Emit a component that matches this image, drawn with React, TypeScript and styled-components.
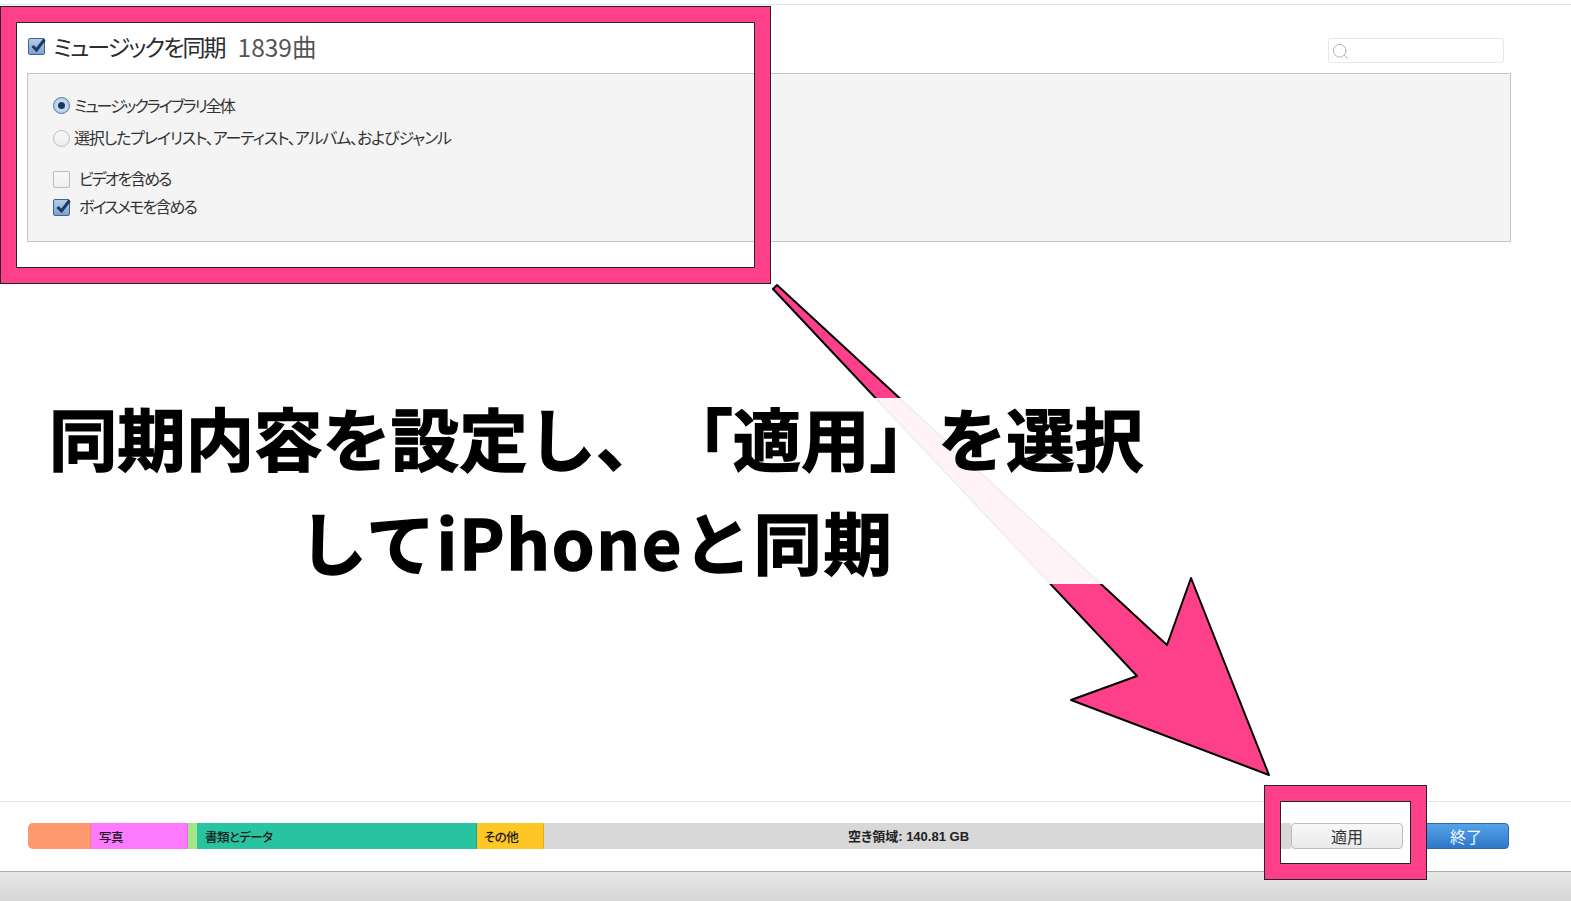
import styled, { createGlobalStyle } from "styled-components";
import { Search } from "lucide-react";

const PINK = "#fe3f8a";
const JP = `"Noto Sans CJK JP", "Noto Sans", sans-serif`;

const GlobalStyle = createGlobalStyle`
  html, body {
    margin: 0;
    padding: 0;
    background: #fff;
    overflow: hidden;
  }
  body {
    font-family: ${JP};
    font-feature-settings: "palt";
  }
`;

const Page = styled.div`
  position: relative;
  width: 1571px;
  height: 901px;
  overflow: hidden;
  display: flex;
  flex-direction: column;
`;

const Main = styled.main`
  flex: 1;
  margin-top: 4px;
  border-top: 1px solid #e4e4e4;
  padding: 0 60px 0 27px;
`;

const HeaderRow = styled.div`
  height: 68px;
  display: flex;
  align-items: flex-start;
  justify-content: space-between;
`;

const TitleGroup = styled.label`
  margin: 24px 0 0 1px;
  display: flex;
  align-items: center;
  gap: 8px;
  height: 34px;
`;

const Title = styled.span`
  font-size: 23px;
  color: #2c2c2c;
  letter-spacing: -1.95px;
`;

const Count = styled.span`
  margin-left: 5px;
  font-size: 24.5px;
  color: #555;
`;

const SearchBox = styled.div`
  margin: 33px 7px 0 0;
  box-sizing: border-box;
  width: 176px;
  height: 25px;
  border: 1px solid #e8e8e8;
  border-radius: 3px;
  padding: 2px 0 0 2px;
  display: flex;
  align-items: center;
  color: #b0b0b0;
`;

const Panel = styled.section`
  box-sizing: border-box;
  height: 169px;
  background: #f4f4f4;
  border: 1px solid #c4c4c4;
  padding: 15px 0 0 25px;
  display: flex;
  flex-direction: column;
`;

const Option = styled.div<{ $height: number; $gap: number; $spacing: number }>`
  height: ${(p) => p.$height}px;
  display: flex;
  align-items: center;
  gap: ${(p) => p.$gap}px;
  font-size: 16px;
  color: #333;
  letter-spacing: ${(p) => p.$spacing}px;
`;

const OptionLabel = styled.span`
  margin-top: -2px;
`;

const CheckBox = styled.span<{ $on?: boolean }>`
  position: relative;
  box-sizing: border-box;
  flex: none;
  width: 17px;
  height: 17px;
  border-radius: 2px;
  border: 1px solid ${(p) => (p.$on ? "#3f6290" : "#bdbdbd")};
  background: ${(p) =>
    p.$on ? "linear-gradient(#b5cde8, #7ea2cd)" : "linear-gradient(#fafafa, #eeeeee)"};
  svg {
    position: absolute;
    left: 0;
    top: -3px;
  }
`;

const Radio = styled.span<{ $on?: boolean }>`
  box-sizing: border-box;
  flex: none;
  width: 17px;
  height: 17px;
  border-radius: 50%;
  display: flex;
  align-items: center;
  justify-content: center;
  border: 1px solid ${(p) => (p.$on ? "#4f79aa" : "#bdbdbd")};
  background: ${(p) =>
    p.$on ? "radial-gradient(#dbe8f6, #a7c3e2)" : "linear-gradient(#f9f9f9, #ececec)"};
  &::after {
    content: "";
    display: ${(p) => (p.$on ? "block" : "none")};
    width: 7px;
    height: 7px;
    border-radius: 50%;
    background: #1d3557;
  }
`;

const OptionSpacer = styled.div`
  height: 11px;
`;

const Footer = styled.footer`
  box-sizing: border-box;
  height: 70px;
  border-top: 1px solid #e5e5e5;
  padding: 21px 62px 0 28px;
  display: flex;
  align-items: flex-start;
`;

const StorageBar = styled.div`
  flex: 1;
  height: 26px;
  display: flex;
  border-radius: 5px 0 0 5px;
  overflow: hidden;
  background: #d8d8d8;
`;

const Segment = styled.div<{ $width: number; $color: string; $edge?: string; $pad?: number }>`
  box-sizing: border-box;
  flex: none;
  width: ${(p) => p.$width}px;
  background: ${(p) => p.$color};
  border-right: 1px solid ${(p) => p.$edge ?? p.$color};
  padding: 1px 0 0 ${(p) => p.$pad ?? 8}px;
  font-size: 12.5px;
  font-weight: 500;
  line-height: 26px;
  letter-spacing: -0.6px;
  color: #1a1a1a;
  white-space: nowrap;
`;

const FreeSpace = styled.div`
  flex: 1;
  padding: 1px 18px 0 0;
  text-align: center;
  font-size: 13px;
  font-weight: 700;
  line-height: 26px;
  color: #222;
  font-family: "Liberation Sans", ${JP};
`;

const Button = styled.button<{ $primary?: boolean }>`
  box-sizing: border-box;
  flex: none;
  height: 26px;
  padding: 0;
  border-radius: 4px;
  font-family: ${JP};
  font-size: 16px;
  line-height: 22px;
  border: 1px solid ${(p) => (p.$primary ? "#2f6aa8" : "#bcbcbc")};
  color: ${(p) => (p.$primary ? "#f2f8ff" : "#333")};
  background: ${(p) =>
    p.$primary ? "linear-gradient(#55a3ea, #2f77c9)" : "linear-gradient(#f8f8f8, #e9e9e9)"};
`;

const ApplyButton = styled(Button)`
  width: 112px;
`;

const DoneButton = styled(Button)`
  width: 86px;
  margin-left: 20px;
`;

const WindowEdge = styled.div`
  box-sizing: border-box;
  height: 30px;
  border-top: 1px solid #aaaaaa;
  background: linear-gradient(#e7e7e7, #d7d7d7);
`;

/* annotations drawn over the screenshot */
const Highlight = styled.div<{ $x: number; $y: number; $w: number; $h: number }>`
  position: absolute;
  box-sizing: border-box;
  left: ${(p) => p.$x}px;
  top: ${(p) => p.$y}px;
  width: ${(p) => p.$w}px;
  height: ${(p) => p.$h}px;
  border: 15px solid ${PINK};
  box-shadow: 0 0 0 1px #26222a, inset 0 0 0 1px #26222a;
`;

const Arrow = styled.svg`
  position: absolute;
  left: 0;
  top: 0;
`;

const Caption = styled.div`
  position: absolute;
  left: 40px;
  top: 398px;
  width: 1112px;
  height: 186px;
  background: rgba(255, 255, 255, 0.94);
  text-align: center;
  font-size: 68.4px;
  font-weight: 700;
  font-feature-settings: normal;
  text-spacing-trim: space-all;
  -webkit-text-stroke: 1.4px #000;
  line-height: 104px;
  color: #000;
  white-space: nowrap;
`;

const CaptionText = styled.div<{ $offset: number; $spacing: number }>`
  margin-top: ${(p) => p.$offset}px;
  letter-spacing: ${(p) => p.$spacing}px;
`;

function Check() {
  return (
    <svg width="18" height="18" viewBox="0 0 18 18">
      <path d="M3.5 10 L7.5 14 L15.5 3.5" fill="none" stroke="#1d3a66" strokeWidth="3" />
    </svg>
  );
}

export default function App() {
  return (
    <Page>
      <GlobalStyle />
      <Main>
        <HeaderRow>
          <TitleGroup>
            <CheckBox $on>
              <Check />
            </CheckBox>
            <Title>ミュージックを同期</Title>
            <Count>1839曲</Count>
          </TitleGroup>
          <SearchBox>
            <Search size={19} strokeWidth={1.2} />
          </SearchBox>
        </HeaderRow>
        <Panel>
          <Option $height={33} $gap={4} $spacing={-2}>
            <Radio $on />
            <OptionLabel>ミュージックライブラリ全体</OptionLabel>
          </Option>
          <Option $height={32} $gap={4} $spacing={-1.13}>
            <Radio />
            <OptionLabel>選択したプレイリスト、アーティスト、アルバム、およびジャンル</OptionLabel>
          </Option>
          <OptionSpacer />
          <Option $height={28} $gap={9} $spacing={-2}>
            <CheckBox />
            <OptionLabel>ビデオを含める</OptionLabel>
          </Option>
          <Option $height={28} $gap={9} $spacing={-1.85}>
            <CheckBox $on>
              <Check />
            </CheckBox>
            <OptionLabel>ボイスメモを含める</OptionLabel>
          </Option>
        </Panel>
      </Main>
      <Footer>
        <StorageBar>
          <Segment $width={63} $color="#ff9a6e" $edge="#f08a5e" />
          <Segment $width={97} $color="#fd7aff" $edge="#e56ae8">
            写真
          </Segment>
          <Segment $width={7} $color="#a5e787" />
          <Segment $width={280} $color="#28c4a2" $edge="#1ca585" $pad={8}>
            書類とデータ
          </Segment>
          <Segment $width={67} $color="#ffc725" $edge="#eeaa10" $pad={7}>
            その他
          </Segment>
          <FreeSpace>空き領域: 140.81 GB</FreeSpace>
        </StorageBar>
        <ApplyButton>適用</ApplyButton>
        <DoneButton $primary>終了</DoneButton>
      </Footer>
      <WindowEdge />

      <Highlight $x={1} $y={7} $w={769} $h={276} />
      <Highlight $x={1265} $y={786} $w={161} $h={93} />
      <Arrow width="1571" height="901" viewBox="0 0 1571 901">
        <polygon
          points="773,289 777,285 1167,645 1191,578 1269,775 1071,700 1137,676"
          fill={PINK}
          stroke="#000"
          strokeWidth="2"
          strokeLinejoin="round"
        />
      </Arrow>
      <Caption>
        <CaptionText $offset={-13} $spacing={0}>
          同期内容を設定し、「適用」を選択
        </CaptionText>
        <CaptionText $offset={0} $spacing={1.7}>
          してiPhoneと同期
        </CaptionText>
      </Caption>
    </Page>
  );
}
